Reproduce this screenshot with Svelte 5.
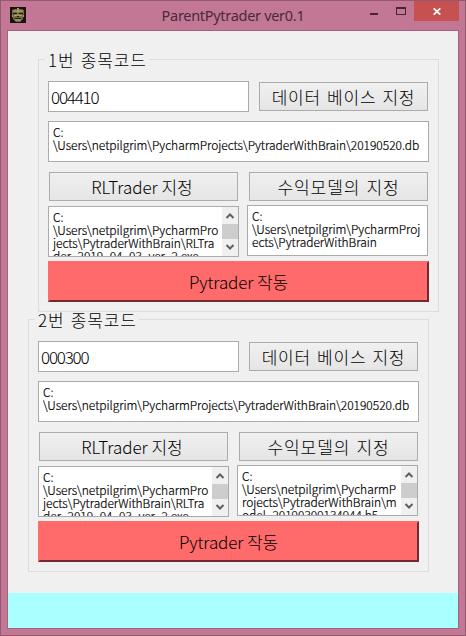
<script lang="ts">
	interface PathBox {
		lines: string[];
		scroll: boolean;
	}
	interface Trader {
		title: string;
		code: string;
		db: string[];
		trader: PathBox;
		model: PathBox;
	}

	const db = ['C:', '\\Users\\netpilgrim\\PycharmProjects\\PytraderWithBrain\\20190520.db'];
	const exe = [
		'C:',
		'\\Users\\netpilgrim\\PycharmPro',
		'jects\\PytraderWithBrain\\RLTra',
		'der_2019_04_03_ver_2.exe'
	];

	let traders: Trader[] = $state([
		{
			title: '1번 종목코드',
			code: '004410',
			db,
			trader: { lines: exe, scroll: true },
			model: {
				lines: ['C:', '\\Users\\netpilgrim\\PycharmProj', 'ects\\PytraderWithBrain'],
				scroll: false
			}
		},
		{
			title: '2번 종목코드',
			code: '000300',
			db,
			trader: { lines: exe, scroll: true },
			model: {
				lines: [
					'C:',
					'\\Users\\netpilgrim\\PycharmP',
					'rojects\\PytraderWithBrain\\m',
					'odel_20190309134944.h5'
				],
				scroll: true
			}
		}
	]);
</script>

{#snippet pathBox(box: PathBox, kind: string)}
	<div class="box {kind}">
		<div class="lines">
			{#each box.lines as line}
				<div class="line">{line}</div>
			{/each}
		</div>
		{#if box.scroll}
			<div class="scrollbar">
				<svg width="16" height="17" viewBox="0 0 16 17"><path d="M4.5 11 8 7.5 11.5 11" /></svg>
				<div class="thumb"></div>
				<svg width="16" height="17" viewBox="0 0 16 17"><path d="M4.5 6 8 9.5 11.5 6" /></svg>
			</div>
		{/if}
	</div>
{/snippet}

<div class="window">
	<header class="titlebar">
		<svg class="logo" width="16" height="16" viewBox="0 0 16 16">
			<rect width="16" height="16" fill="#1c1112" />
			<path d="M2 3 5 2h6l3 1v4l-1 5-3 3H6l-3-3-1-5z" fill="#716642" />
			<path d="M3 4h3l2 1 2-1h3M4 9l3-1h2l3 1M5 13h6" stroke="#c1b477" fill="none" />
			<path d="M3 6h4v1H3zM9 6h4v1H9zM7 9h2v1H7zM5 11h6v1H5z" fill="#231b15" />
			<path d="M7 1h2v3H7zM2 8h1v2H2zM13 8h1v2h-1z" fill="#a39a62" />
		</svg>
		<h1>ParentPytrader ver0.1</h1>
		<div class="controls">
			<button class="min" aria-label="minimize">
				<svg width="8" height="2"><rect width="8" height="2" fill="#4a2233" /></svg>
			</button>
			<button class="max" aria-label="maximize">
				<svg width="10" height="8"><path d="M0 0h10v8H0zM1 2v5h8V2z" fill="#4a2233" fill-rule="evenodd" /></svg>
			</button>
			<button class="close" aria-label="close">
				<svg width="8" height="7" viewBox="0 0 8 7"><path d="M.7.3l6.6 6.4M7.3.3.7 6.7" stroke="#fff" stroke-width="1.7" /></svg>
			</button>
		</div>
	</header>

	<main class="client">
		{#each traders as t, i}
			<section class="group" class:second={i === 1}>
				<div class="title">{t.title}</div>
				<div class="row code-row">
					<input type="text" aria-label={t.title} bind:value={t.code} />
					<button class="btn db">데이터 베이스 지정</button>
				</div>
				{@render pathBox({ lines: t.db, scroll: false }, 'wide')}
				<div class="row btn-row">
					<button class="btn rl">RLTrader 지정</button>
					<button class="btn model-btn">수익모델의 지정</button>
				</div>
				<div class="row path-row">
					{@render pathBox(t.trader, 'trader')}
					{@render pathBox(t.model, 'model')}
				</div>
				<button class="run">Pytrader 작동</button>
			</section>
		{/each}
		<footer class="status"></footer>
	</main>
</div>

<style>
	:global(body) {
		margin: 0;
		overflow: hidden;
	}
	.window {
		box-sizing: border-box;
		width: 466px;
		height: 636px;
		padding: 0 6px 6px;
		display: flex;
		flex-direction: column;
		background: #c27895;
		border: 1px solid #94586f;
		font-family: 'Noto Sans CJK KR', sans-serif;
		font-weight: 300;
		color: #000;
	}
	button {
		box-sizing: border-box;
		margin: 0;
		padding: 0;
		font: inherit;
		color: inherit;
		border-radius: 0;
	}
	.titlebar {
		height: 29px;
		flex: none;
		display: grid;
		grid-template-columns: 90px 1fr 90px;
		align-items: start;
	}
	.logo {
		margin: 6px 0 0 3px;
	}
	h1 {
		margin: 4px 0 0;
		font: 400 14.5px/21px 'Noto Sans', sans-serif;
		letter-spacing: -0.3px;
		text-align: center;
		white-space: nowrap;
		color: #4a2938;
	}
	.controls {
		display: flex;
		justify-content: flex-end;
	}
	.controls button {
		height: 20px;
		border: 0;
		background: none;
		display: flex;
		align-items: flex-start;
		flex: none;
	}
	.controls .min {
		width: 26px;
		padding-top: 12px;
	}
	.controls .max {
		width: 18px;
		padding-top: 6px;
	}
	.controls .close {
		width: 45px;
		padding: 7px 0 0 19px;
		background: #c75050;
	}
	.client {
		flex: 1;
		min-height: 0;
		display: flex;
		flex-direction: column;
		border: 1px solid #a3637e;
		background: #f0f0f0;
	}
	.group {
		box-sizing: border-box;
		flex: none;
		width: 401px;
		height: 253px;
		margin: 28px 0 0 30px;
		padding: 0 9px;
		display: flex;
		flex-direction: column;
		border: 1px solid #dcdcdc;
	}
	.group.second {
		margin: 7px 0 0 20px;
	}
	.title {
		align-self: flex-start;
		height: 14px;
		width: 104px;
		margin: -7px 0 14px -3px;
		padding-left: 3px;
		box-sizing: border-box;
		font-size: 17px;
		line-height: 13px;
		letter-spacing: 0.9px;
		word-spacing: 1.5px;
		white-space: nowrap;
		background: #f0f0f0;
	}
	.row {
		display: flex;
		align-items: flex-start;
		flex: none;
	}
	.code-row {
		gap: 10px;
		align-items: center;
	}
	input {
		box-sizing: border-box;
		width: 201px;
		height: 31px;
		margin: 0;
		padding: 0 2px;
		border: 1px solid #ababab;
		background: #fff;
		color: #000;
		font: inherit;
		font-size: 17px;
		letter-spacing: -1.2px;
		outline: none;
	}
	.btn {
		height: 29px;
		border: 1px solid #acacac;
		background: linear-gradient(#f0f0f0, #e5e5e5);
		font-size: 17px;
		line-height: 25px;
		white-space: nowrap;
	}
	.db {
		width: 169px;
		letter-spacing: 0.8px;
		word-spacing: 1.5px;
	}
	.rl {
		width: 189px;
		padding-right: 3px;
	}
	.model-btn {
		width: 179px;
		letter-spacing: 0.9px;
		word-spacing: 1.5px;
	}
	.btn-row {
		margin: 10px 0 0 1px;
		gap: 11px;
	}
	.path-row {
		margin-top: 4px;
		gap: 8px;
	}
	.box {
		box-sizing: border-box;
		flex: none;
		display: flex;
		border: 1px solid #ababab;
		background: #fff;
		overflow: hidden;
	}
	.wide {
		width: 381px;
		height: 41px;
		margin-top: 9px;
	}
	.trader {
		width: 191px;
		height: 51px;
		margin-top: 1px;
	}
	.model {
		width: 181px;
		height: 51px;
	}
	.lines {
		flex: 1;
		min-width: 0;
		padding: 3px 0 0 4px;
		font-size: 12px;
		line-height: 13px;
		letter-spacing: -0.04px;
		-webkit-text-stroke: 0.2px #000;
	}
	.line {
		white-space: pre;
	}
	.scrollbar {
		width: 16px;
		flex: none;
		background: #f0f0f0;
	}
	.scrollbar svg {
		display: block;
	}
	.scrollbar path {
		fill: none;
		stroke: #606060;
		stroke-width: 2;
	}
	.thumb {
		height: 15px;
		background: #cdcdcd;
	}
	.run {
		width: 381px;
		height: 41px;
		margin-top: 4px;
		border: 2px solid;
		border-color: #ff6b6b #6e2c30 #6e2c30 #ff6b6b;
		background: #ff6b6b;
		font-size: 17px;
		line-height: 33px;
		letter-spacing: -0.1px;
	}
	.status {
		height: 35px;
		flex: none;
		margin-top: auto;
		background: #aaffff;
	}
</style>
